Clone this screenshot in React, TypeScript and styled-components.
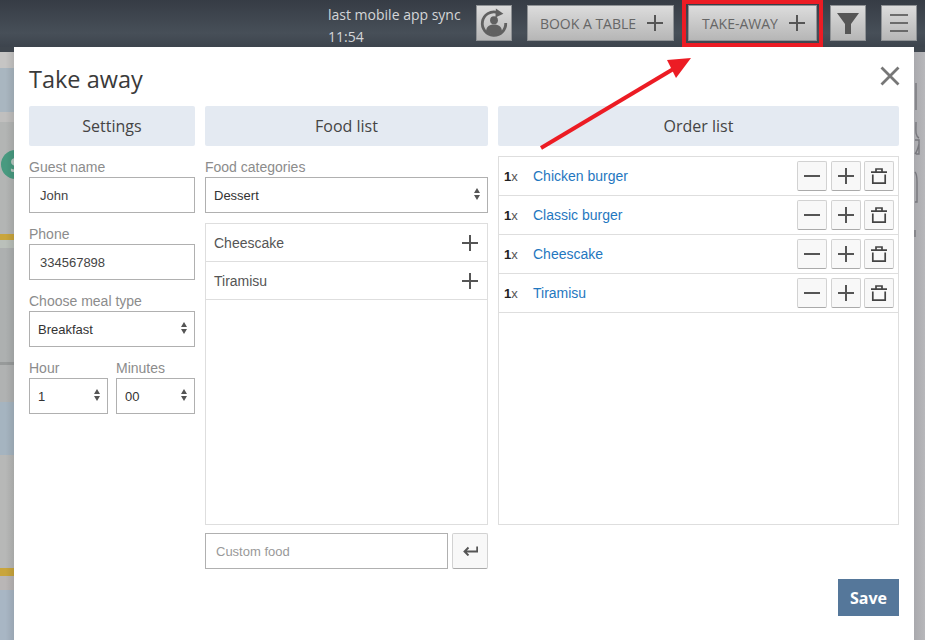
import React from 'react';
import styled, { createGlobalStyle } from 'styled-components';

const GlobalStyle = createGlobalStyle`
  html, body {
    margin: 0;
    padding: 0;
    width: 925px;
    height: 640px;
    overflow: hidden;
    background: #b4b5b5;
    font-family: "Liberation Sans", Arial, sans-serif;
  }
  * { box-sizing: border-box; }
`;

const Page = styled.div`
  width: 925px;
  height: 640px;
  display: flex;
  flex-direction: column;
  position: relative;
  overflow: hidden;
`;

const TopBar = styled.header`
  height: 47px;
  flex: none;
  display: flex;
  justify-content: flex-end;
  align-items: flex-start;
  padding: 5px 8px 0 0;
  background: linear-gradient(#363c45, #474f58 70%, #3d444d);
`;

const SyncText = styled.div`
  width: 133px;
  margin-right: 15px;
  margin-top: -1px;
  font-family: "Open Sans", sans-serif;
  font-size: 14px;
  line-height: 22px;
  color: #d4d6d8;
  white-space: nowrap;
`;

const BarButton = styled.div<{ $gap?: number; $wide?: number; $text?: boolean }>`
  width: ${p => p.$wide ?? 36}px;
  height: 36px;
  margin-right: ${p => p.$gap ?? 0}px;
  padding-left: ${p => (p.$text ? 2 : 0)}px;
  display: flex;
  align-items: center;
  justify-content: center;
  gap: 11px;
  background: linear-gradient(#dcdcdc, #b6b6b6);
  border: 1px solid #8f9295;
  font-family: "Open Sans", sans-serif;
  font-size: 14px;
  color: #666;
  position: relative;
`;

const Highlight = styled.span`
  position: absolute;
  left: -7px;
  right: -7px;
  top: -6px;
  height: 47px;
  border: 4px solid #ec1c24;
  pointer-events: none;
`;

const Body = styled.div`
  flex: 1;
  display: flex;
  min-height: 0;
`;

const LeftStrip = styled.div`
  width: 14px;
  flex: none;
  position: relative;
  overflow: hidden;
  &::after {
    content: "";
    position: absolute;
    inset: 5px 0 0;
    background: linear-gradient(90deg, transparent 40%, rgba(0, 0, 0, 0.09));
  }
`;

const BlurredBackdrop = styled.div`
  display: flex;
  flex-direction: column;
  height: 100%;
  width: 30px;
  position: relative;
  filter: blur(0.6px);
`;

const Band = styled.div<{ $h: number; $c: string }>`
  height: ${p => p.$h}px;
  flex: none;
  background: ${p => p.$c};
`;

const GreenBadge = styled.span`
  position: absolute;
  left: 1px;
  top: 103px;
  width: 29px;
  height: 29px;
  border-radius: 50%;
  background: #489a80;
  color: #b9c9c2;
  font: bold 20px/29px "Open Sans", sans-serif;
  text-align: center;
`;

const RightStrip = styled.div`
  width: 11px;
  flex: none;
  display: flex;
  flex-direction: column;
  background: linear-gradient(90deg, #a9a9ad, #b8b8bb);
`;

const Modal = styled.main`
  width: 900px;
  flex: none;
  background: #fff;
  padding: 0 15px;
  display: flex;
  flex-direction: column;
`;

const TitleRow = styled.div`
  height: 59px;
  flex: none;
  display: flex;
  justify-content: space-between;
  align-items: flex-start;
`;

const Title = styled.h1`
  margin: 14px 0 0;
  font-family: "Open Sans", sans-serif;
  font-size: 23.5px;
  line-height: 36px;
  font-weight: 400;
  color: #3a3a3a;
`;

const CloseIcon = styled.svg`
  margin: 19px -1px 0 0;
`;

const Columns = styled.div`
  display: grid;
  grid-template-columns: 166px 283px 401px;
  column-gap: 10px;
`;

const Column = styled.section`
  display: flex;
  flex-direction: column;
  min-width: 0;
`;

const ColumnHeader = styled.div`
  height: 40px;
  margin-bottom: 10px;
  background: #e4eaf2;
  border-radius: 2px;
  font-family: "Open Sans", sans-serif;
  font-size: 16px;
  line-height: 40px;
  text-align: center;
  color: #444;
`;

const Field = styled.div`
  margin-bottom: 10px;
  min-width: 0;
`;

const HalfFields = styled.div`
  display: grid;
  grid-template-columns: 79px 79px;
  column-gap: 8px;
`;

const Label = styled.label`
  display: block;
  height: 21px;
  font-size: 14px;
  line-height: 23px;
  color: #8c8c8c;
`;

const TextInput = styled.input`
  display: block;
  width: 100%;
  height: 36px;
  padding: 0 10px;
  border: 1px solid #b0b0b0;
  border-radius: 0;
  outline: none;
  background: #fff;
  font-family: "Liberation Sans", Arial, sans-serif;
  font-size: 13px;
  color: #444;
  &::placeholder { color: #999; opacity: 1; }
`;

const SelectWrap = styled.div`
  position: relative;
  height: 36px;
  &::before, &::after {
    content: "";
    position: absolute;
    right: 8px;
    border-left: 3px solid transparent;
    border-right: 3px solid transparent;
    pointer-events: none;
  }
  &::before { top: 11px; border-bottom: 5px solid #555; }
  &::after { top: 18px; border-top: 5px solid #555; }
`;

const Select = styled.select`
  display: block;
  width: 100%;
  height: 36px;
  padding: 0 8px;
  border: 1px solid #b0b0b0;
  border-radius: 0;
  outline: none;
  appearance: none;
  background: #fff;
  font-family: "Liberation Sans", Arial, sans-serif;
  font-size: 13px;
  color: #333;
`;

const ListBox = styled.div<{ $h: number }>`
  height: ${p => p.$h}px;
  border: 1px solid #dedede;
`;

const FoodRow = styled.div`
  height: 38px;
  padding: 0 9px 0 8px;
  display: flex;
  align-items: center;
  justify-content: space-between;
  border-bottom: 1px solid #dedede;
  font-size: 14px;
  color: #555;
`;

const OrderRow = styled.div`
  height: 39px;
  padding: 0 4px 0 5px;
  display: flex;
  align-items: center;
  border-bottom: 1px solid #dedede;
`;

const Qty = styled.span`
  width: 29px;
  flex: none;
  font-size: 13px;
  color: #555;
  b { color: #222; }
`;

const FoodLink = styled.a`
  flex: 1;
  font-size: 14px;
  color: #1f77c0;
`;

const RowButtons = styled.div`
  display: flex;
  gap: 3.5px;
`;

const IconButton = styled.button<{ $h?: number; $w?: number }>`
  width: ${p => p.$w ?? 30}px;
  height: ${p => p.$h ?? 30}px;
  padding: 0;
  display: flex;
  align-items: center;
  justify-content: center;
  background: #f8f8f8;
  border: 1px solid #d2d2d2;
  border-bottom-color: #aaa;
  border-radius: 2px;
`;

const CustomRow = styled.div`
  margin-top: 8px;
  display: grid;
  grid-template-columns: 243px 36px;
  column-gap: 4px;
`;

const Footer = styled.div`
  display: flex;
  justify-content: flex-end;
  margin-top: 10px;
`;

const SaveButton = styled.button`
  width: 61px;
  height: 37px;
  border: none;
  background: #55779a;
  color: #fff;
  font-family: "Open Sans", sans-serif;
  font-size: 16px;
  font-weight: 700;
`;

const ArrowOverlay = styled.svg`
  position: absolute;
  left: 0;
  top: 0;
  pointer-events: none;
`;

const Plus = () => (
  <svg width="16" height="16" viewBox="0 0 16 16">
    <path d="M8 0v16M0 8h16" stroke="#555" strokeWidth="2" fill="none" />
  </svg>
);

const Minus = () => (
  <svg width="16" height="16" viewBox="0 0 16 16">
    <path d="M0 8h16" stroke="#555" strokeWidth="2" fill="none" />
  </svg>
);

const Trash = () => (
  <svg width="16" height="16" viewBox="0 0 16 16">
    <path d="M5 3.5V1h6v2.5M0 4.2h16M1.8 6.5v8.6h12.4V6.5" stroke="#444" strokeWidth="1.7" fill="none" />
  </svg>
);

const ReturnArrow = () => (
  <svg width="15" height="10" viewBox="0 0 15 10">
    <path d="M14.2 0.5v5H2M5.5 1.5L1.5 5.5l4 4" stroke="#555" strokeWidth="1.9" fill="none" />
  </svg>
);

const SyncIcon = () => (
  <svg width="30" height="30" viewBox="0 0 32 32">
    <path d="M19.5 4.6A12.5 12.5 0 1 0 28.5 16" stroke="#606060" strokeWidth="3" fill="none" />
    <path d="M18 0.5l8 5.5-8.5 4z" fill="#606060" />
    <circle cx="16" cy="13" r="4.2" fill="#606060" />
    <path d="M7.5 25c0-5 3.5-7.5 8.5-7.5s8.5 2.5 8.5 7.5c-2.2 2-5.2 3-8.5 3s-6.3-1-8.5-3z" fill="#606060" />
  </svg>
);

const FilterIcon = () => (
  <svg width="22" height="21" viewBox="0 0 22 21">
    <path d="M0 0h22l-8 11v10H8V11z" fill="#565656" />
  </svg>
);

const MenuIcon = () => (
  <svg width="18" height="18" viewBox="0 0 18 18">
    <path d="M0 1h18M0 9h18M0 17h18" stroke="#4c4c4c" strokeWidth="1.6" fill="none" />
  </svg>
);

const RightFragments = () => (
  <svg width="11" height="195" viewBox="0 0 11 195">
    <g stroke="#77777c" strokeWidth="1.4" fill="none">
      <path d="M2 31v27" />
      <path d="M2 70c0 8-1 14 3 16M1 88h4v14H2M1 102c2-2 3-6 4-10" />
      <path d="M1 120c2 2 2 6 2 10v20H1" />
      <path d="M1 178v7" />
    </g>
  </svg>
);

const leftBands: [number, string][] = [
  [5, '#3f464e'],
  [16, '#c6c5c4'],
  [44, '#a9b6c0'],
  [10, '#c0bfbe'],
  [112, '#b3b5b4'],
  [6, '#c9a53c'],
  [8, '#bac0ba'],
  [114, '#adb0b0'],
  [3, '#979a9a'],
  [37, '#b0b2b2'],
  [53, '#a5b4c0'],
  [113, '#b7b8b7'],
  [8, '#c9a53c'],
  [14, '#b9b6b6'],
  [50, '#a8b6c4'],
];

const orders = ['Chicken burger', 'Classic burger', 'Cheescake', 'Tiramisu'];

export default function App() {
  return (
    <Page>
      <GlobalStyle />
      <TopBar>
        <SyncText>last mobile app sync<br />11:54</SyncText>
        <BarButton $gap={15}><SyncIcon /></BarButton>
        <BarButton $text $wide={147} $gap={14}>BOOK A TABLE <Plus /></BarButton>
        <BarButton $text $wide={129} $gap={13}>TAKE-AWAY <Plus /><Highlight /></BarButton>
        <BarButton $gap={15}><FilterIcon /></BarButton>
        <BarButton><MenuIcon /></BarButton>
      </TopBar>
      <Body>
        <LeftStrip>
          <BlurredBackdrop>
            {leftBands.map(([h, c], i) => <Band key={i} $h={h} $c={c} />)}
            <GreenBadge>S</GreenBadge>
          </BlurredBackdrop>
        </LeftStrip>
        <Modal>
          <TitleRow>
            <Title>Take away</Title>
            <CloseIcon width="20" height="20" viewBox="0 0 20 20">
              <path d="M1.5 1.5l17 17M18.5 1.5l-17 17" stroke="#777" strokeWidth="2.8" fill="none" />
            </CloseIcon>
          </TitleRow>
          <Columns>
            <Column>
              <ColumnHeader>Settings</ColumnHeader>
              <Field>
                <Label>Guest name</Label>
                <TextInput value="John" readOnly />
              </Field>
              <Field>
                <Label>Phone</Label>
                <TextInput value="334567898" readOnly />
              </Field>
              <Field>
                <Label>Choose meal type</Label>
                <SelectWrap><Select><option>Breakfast</option></Select></SelectWrap>
              </Field>
              <HalfFields>
                <Field>
                  <Label>Hour</Label>
                  <SelectWrap><Select><option>1</option></Select></SelectWrap>
                </Field>
                <Field>
                  <Label>Minutes</Label>
                  <SelectWrap><Select><option>00</option></Select></SelectWrap>
                </Field>
              </HalfFields>
            </Column>
            <Column>
              <ColumnHeader>Food list</ColumnHeader>
              <Field>
                <Label>Food categories</Label>
                <SelectWrap><Select><option>Dessert</option></Select></SelectWrap>
              </Field>
              <ListBox $h={302}>
                <FoodRow>Cheescake <Plus /></FoodRow>
                <FoodRow>Tiramisu <Plus /></FoodRow>
              </ListBox>
              <CustomRow>
                <TextInput placeholder="Custom food" readOnly />
                <IconButton $w={36} $h={36}><ReturnArrow /></IconButton>
              </CustomRow>
            </Column>
            <Column>
              <ColumnHeader>Order list</ColumnHeader>
              <ListBox $h={369}>
                {orders.map(name => (
                  <OrderRow key={name}>
                    <Qty><b>1</b>x</Qty>
                    <FoodLink>{name}</FoodLink>
                    <RowButtons>
                      <IconButton><Minus /></IconButton>
                      <IconButton><Plus /></IconButton>
                      <IconButton><Trash /></IconButton>
                    </RowButtons>
                  </OrderRow>
                ))}
              </ListBox>
            </Column>
          </Columns>
          <Footer>
            <SaveButton>Save</SaveButton>
          </Footer>
        </Modal>
        <RightStrip>
          <Band $h={5} $c="#3f464e" />
          <RightFragments />
        </RightStrip>
      </Body>
      <ArrowOverlay width="925" height="640" viewBox="0 0 925 640">
        <path d="M541 148L675 68" stroke="#ec1c24" strokeWidth="4" fill="none" />
        <path d="M691 58L667 60L676 78z" fill="#ec1c24" />
      </ArrowOverlay>
    </Page>
  );
}
